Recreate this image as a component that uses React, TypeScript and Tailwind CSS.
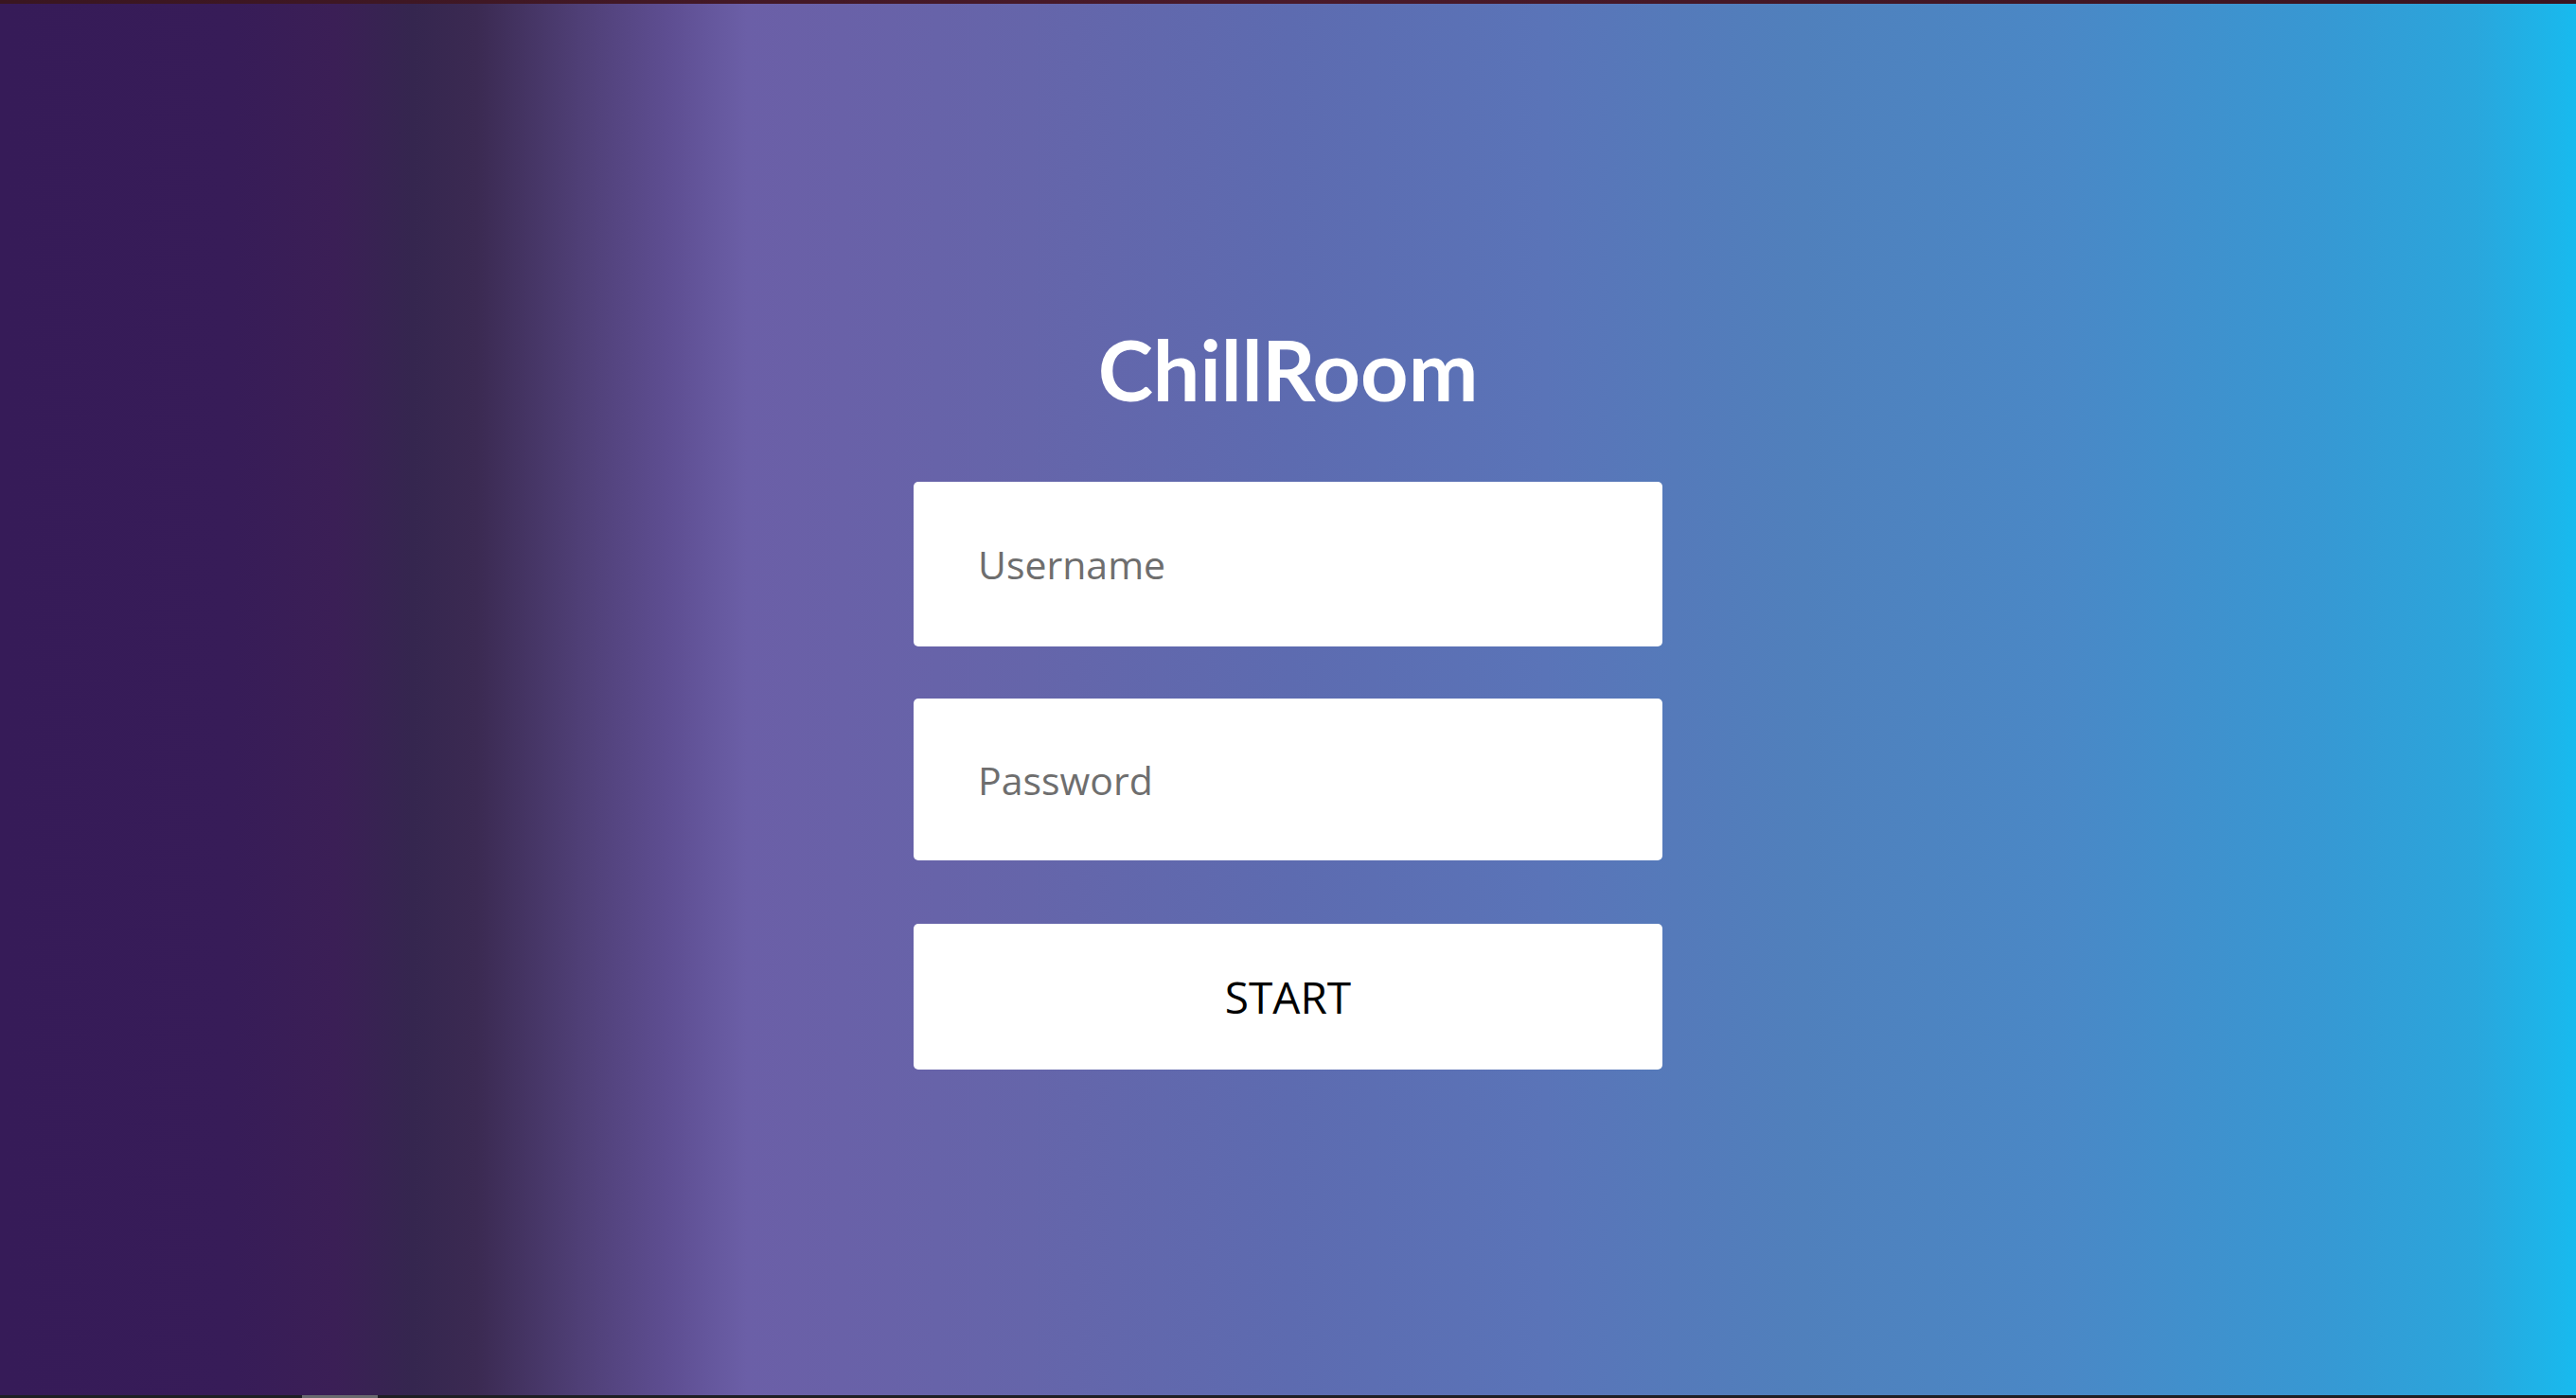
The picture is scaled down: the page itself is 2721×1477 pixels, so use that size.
import { useState } from 'react'

export default function App() {
  const [username, setUsername] = useState('')
  const [password, setPassword] = useState('')

  return (
    <div className="flex h-[1477px] w-full flex-col overflow-hidden bg-[#1f1f24]">
      {/* top window edge */}
      <div className="h-[4px] w-full bg-[linear-gradient(to_right,#3a1620,#4a1a2a_50%,#3b1420)]" />

      {/* Login screen */}
      <main className="flex flex-1 flex-col items-center bg-[linear-gradient(to_right,#361b58_0%,#371c58_9%,#3b1f56_13%,#35264f_16%,#3b2a52_18.5%,#4f3f76_22.5%,#5e4e92_26%,#6b5fa7_29%,#6565aa_40%,#5d6bb0_50%,#5a74b8_60%,#5080bc_70%,#4a88c6_80%,#3798d3_90%,#2aa6dc_96%,#18baee_100%)]">
        <h1 className="mt-[342px] font-['Lato',sans-serif] text-[88px] leading-none font-bold text-white">
          ChillRoom
        </h1>

        <form
          className="mt-[75px] flex w-[791px] flex-col"
          onSubmit={(e) => e.preventDefault()}
        >
          <input
            type="text"
            placeholder="Username"
            value={username}
            onChange={(e) => setUsername(e.target.value)}
            className="h-[174px] w-full rounded-[5px] bg-white pl-[68px] font-['Open_Sans',sans-serif] text-[41px] text-[#333] placeholder:text-[#6e6e6e] outline-none"
          />
          <input
            type="password"
            placeholder="Password"
            value={password}
            onChange={(e) => setPassword(e.target.value)}
            className="mt-[55px] h-[171px] w-full rounded-[5px] bg-white pl-[68px] font-['Open_Sans',sans-serif] text-[41px] text-[#333] placeholder:text-[#6e6e6e] outline-none"
          />
          <button
            type="submit"
            className="mt-[67px] h-[154px] w-full rounded-[5px] bg-white font-['Open_Sans',sans-serif] text-[46px] text-black"
          >
            START
          </button>
        </form>
      </main>

      {/* bottom edge */}
      <div className="flex h-[3px] w-full bg-[#1f1f24]">
        <div className="ml-[319px] h-full w-[80px] bg-[#6a6a6e]" />
      </div>
    </div>
  )
}
